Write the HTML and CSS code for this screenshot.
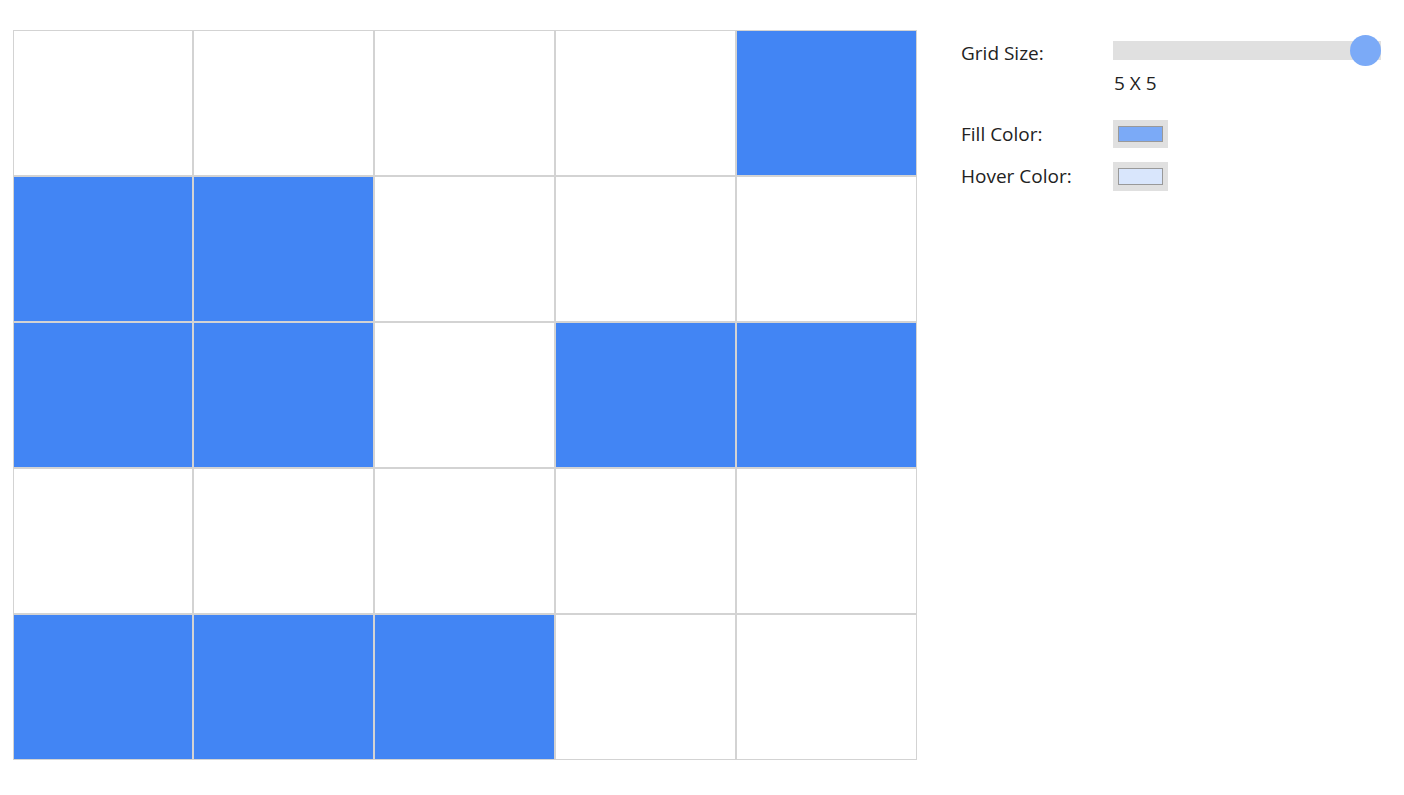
FILE: index.html
```html
<!DOCTYPE html>
<html lang="en">
<head>
    <meta charset="UTF-8">
    <meta name="viewport" content="width=device-width, initial-scale=1.0">
    <title>Grid Painter</title>
    <link rel="stylesheet" href="styles.css">
</head>
<body>
    <div id="app">
        <div id="grid">
            <div class="cell"></div>
            <div class="cell"></div>
            <div class="cell"></div>
            <div class="cell"></div>
            <div class="cell filled"></div>

            <div class="cell filled"></div>
            <div class="cell filled"></div>
            <div class="cell"></div>
            <div class="cell"></div>
            <div class="cell"></div>

            <div class="cell filled"></div>
            <div class="cell filled"></div>
            <div class="cell"></div>
            <div class="cell filled"></div>
            <div class="cell filled"></div>

            <div class="cell"></div>
            <div class="cell"></div>
            <div class="cell"></div>
            <div class="cell"></div>
            <div class="cell"></div>

            <div class="cell filled"></div>
            <div class="cell filled"></div>
            <div class="cell filled"></div>
            <div class="cell"></div>
            <div class="cell"></div>
        </div>

        <div id="controls">
            <div class="row size-row">
                <label for="grid-size">Grid Size:</label>
                <div class="size-field">
                    <input type="range" id="grid-size" min="2" max="5" value="5">
                    <span id="size-label">5 X 5</span>
                </div>
            </div>

            <div class="row fill-row">
                <label for="fill-color">Fill Color:</label>
                <input type="color" id="fill-color" value="#7baaf7">
            </div>

            <div class="row hover-row">
                <label for="hover-color">Hover Color:</label>
                <input type="color" id="hover-color" value="#d9e6fc">
            </div>
        </div>
    </div>
</body>
</html>
```

FILE: styles.css
```css
body {
    margin: 0;
    font-family: "Open Sans", "Noto Sans", sans-serif;
    font-size: 19px;
    color: #222;
    background-color: white;
}
#app {
    display: flex;
    align-items: flex-start;
    padding: 30px 13px;
}
#grid {
    display: grid;
    grid-template-columns: 180px repeat(4, 181px);
    grid-template-rows: repeat(5, 146px);
}
.cell {
    border: 1px solid #d3d3d3;
    background-color: white;
}
.cell.filled {
    background-color: #4285f4;
}
#controls {
    display: flex;
    flex-direction: column;
    margin-left: 44px;
    margin-top: 9px;
}
.row {
    display: flex;
    align-items: flex-start;
}
.row label {
    width: 152px;
    line-height: 28px;
}
.fill-row {
    margin-top: 23px;
}
.hover-row {
    margin-top: 14px;
}
.hover-row input[type=color] {
    height: 29px;
}
.size-field {
    display: flex;
    flex-direction: column;
    padding-top: 2px;
}
#size-label {
    margin-top: 9px;
    padding-left: 1px;
    line-height: 28px;
}
input[type=range] {
    -webkit-appearance: none;
    appearance: none;
    width: 268px;
    height: 19px;
    margin: 0;
    background-color: #e0e0e0;
    outline: none;
}
input[type=range]::-webkit-slider-thumb {
    -webkit-appearance: none;
    appearance: none;
    width: 31px;
    height: 31px;
    border-radius: 50%;
    background-color: #7baaf7;
    cursor: pointer;
}
input[type=color] {
    -webkit-appearance: none;
    appearance: none;
    display: block;
    width: 55px;
    height: 28px;
    margin: 0;
    padding: 6px 5px;
    border: none;
    background-color: #e0e0e0;
    cursor: pointer;
}
input[type=color]::-webkit-color-swatch-wrapper {
    padding: 0;
}
input[type=color]::-webkit-color-swatch {
    border: 1px solid #999;
    border-radius: 0;
}
```
